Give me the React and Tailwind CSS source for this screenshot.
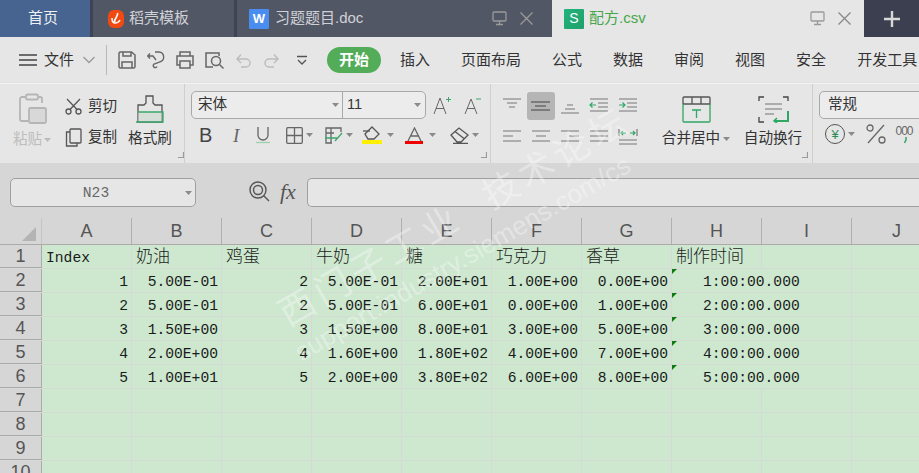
import React from 'react';

const cols = ['A', 'B', 'C', 'D', 'E', 'F', 'G', 'H', 'I', 'J'];
const menus = ['插入', '页面布局', '公式', '数据', '审阅', '视图', '安全', '开发工具'];
const head = ['Index', '奶油', '鸡蛋', '牛奶', '糖', '巧克力', '香草', '制作时间'];
const rows = [
  ['1', '5.00E-01', '2', '5.00E-01', '2.00E+01', '1.00E+00', '0.00E+00', '1:00:00.000'],
  ['2', '5.00E-01', '2', '5.00E-01', '6.00E+01', '0.00E+00', '1.00E+00', '2:00:00.000'],
  ['3', '1.50E+00', '3', '1.50E+00', '8.00E+01', '3.00E+00', '5.00E+00', '3:00:00.000'],
  ['4', '2.00E+00', '4', '1.60E+00', '1.80E+02', '4.00E+00', '7.00E+00', '4:00:00.000'],
  ['5', '1.00E+01', '5', '2.00E+00', '3.80E+02', '6.00E+00', '8.00E+00', '5:00:00.000'],
];

// small svg wrapper, stroke icons
const Ico = ({ w = 18, h = 18, c = '#666', sw = 1.3, className = '', children }) => (
  <svg width={w} height={h} viewBox={`0 0 ${w} ${h}`} fill="none" stroke={c} strokeWidth={sw} className={`shrink-0 ${className}`}>
    {children}
  </svg>
);

const Caret = ({ c = '#8a8a8a', className = '' }) => (
  <svg width="7" height="4" viewBox="0 0 7 4" className={`shrink-0 ${className}`}><path d="M0 0h7L3.5 4z" fill={c} /></svg>
);

const Corner = () => (
  <svg width="6" height="6" viewBox="0 0 6 6" className="shrink-0"><path d="M5.5 0v5.5H0" fill="none" stroke="#9a9a9a" strokeWidth="1.2" /></svg>
);

const Monitor = () => (
  <Ico w={15} h={15} c="#9a9a9a">
    <rect x="1" y="1" width="13" height="9" rx="1" />
    <path d="M7.500 10v3M4 13.500h7" />
  </Ico>
);

const Close = ({ c = '#9a9a9a' }) => (
  <Ico w={15} h={15} c={c}><path d="M1.500 1.500l12 12M13.500 1.500l-12 12" /></Ico>
);

const Tab = ({ className, children }) => (
  <div className={`flex h-full shrink-0 items-center ${className}`}>{children}</div>
);

const AlignIcon = ({ lines, active, green }) => (
  <div className={`flex h-[28px] w-[28px] items-center justify-center rounded-[3px] ${active ? 'bg-[#b5b5b5]' : ''}`}>
    <Ico w={20} h={18} c={active ? '#444' : '#777'} sw={1.2}>
      {lines.map((l, i) => <path key={i} d={l} />)}
      {green && <path d={green} stroke="#2fa866" />}
    </Ico>
  </div>
);

const GridCell = ({ children, right, last, head }) => (
  <div className={`flex h-full w-[90px] shrink-0 items-center overflow-visible border-r border-[#d5dad5] ${head ? 'pt-[3px]' : 'pt-[3px]'} ${right ? 'justify-end pr-[3px]' : 'pl-[4px]'} ${last ? 'border-r-0' : ''}`}>
    {children}
  </div>
);

const RowHead = ({ n }) => (
  <div className="flex h-full w-[42px] shrink-0 items-center justify-center border-r border-b border-[#ababab] bg-[#d6d6d6] font-['Liberation_Sans',sans-serif] text-[18px] text-[#555]">{n}</div>
);

export default function App() {
  return (
    <div className="relative h-[473px] w-[919px] overflow-hidden bg-[#d6d6d6] font-['Liberation_Sans','Noto_Sans_CJK_SC',sans-serif]">
      {/* tabs */}
      <div className="flex h-[37px] bg-[#3f4354] text-[15px]">
        <Tab className="w-[90px] justify-center bg-[#46648f] pr-[4px] text-[#eef0f4]">首页</Tab>
        <Tab className="ml-[3px] w-[141px] gap-[5px] bg-[#525766] pl-[15px] text-[#cfd1d6]">
          <svg width="16" height="18" viewBox="0 0 16 18" className="shrink-0">
            <rect width="16" height="18" rx="6" fill="#f04a12" />
            <path d="M9.500 3c1 3-3 5-3 9M4 8c0 3 1 5 3 5s4-1 5-3" fill="none" stroke="#fff" strokeWidth="1.600" />
          </svg>
          <span>稻壳模板</span>
        </Tab>
        <Tab className="ml-[3px] w-[315px] bg-[#525766] pl-[12px] text-[#cfd1d6]">
          <div className="flex h-[20px] w-[20px] items-center justify-center rounded-[1px] bg-[#4a8df0] text-[13px] font-bold text-white">W</div>
          <span className="ml-[6px]">习题题目.doc</span>
          <div className="ml-[129px] flex items-center gap-[12px]"><Monitor /><Close /></div>
        </Tab>
        <Tab className="w-[312px] bg-[#e6e6e6] pl-[12px] text-[#46a64a]">
          <div className="flex h-[20px] w-[20px] items-center justify-center rounded-[1px] bg-gradient-to-br from-[#22b37b] to-[#1fa06c] text-[14px] text-white">S</div>
          <span className="ml-[5px]">配方.csv</span>
          <div className="ml-[164px] flex items-center gap-[12px]"><Monitor /><Close c="#888" /></div>
        </Tab>
        <Tab className="flex-1 justify-center bg-[#3c3f4f]">
          <Ico w={16} h={16} c="#d8d8d8" sw={2.400}><path d="M8 0v16M0 8h16" /></Ico>
        </Tab>
      </div>

      {/* menu row */}
      <div className="flex h-[46px] items-center bg-[#e6e6e6] pl-[19px] text-[15px] text-[#333]">
        <Ico w={18} h={14} c="#444"><path d="M0 2h18M0 7h18M0 12h18" /></Ico>
        <span className="ml-[7px]">文件</span>
        <Ico w={12} h={8} c="#999" className="ml-[9px]"><path d="M.5 1l5.500 5.500L11.500 1" /></Ico>
        <div className="ml-[11px] h-[30px] w-px bg-[#b9b9b9]" />
        <div className="ml-[11px] flex items-center gap-[11px]">
          <Ico c="#666" sw={1.500}>
            <path d="M2.500 1h11l3.500 3v11.500a1.500 1.500 0 0 1-1.500 1.500h-13A1.500 1.500 0 0 1 1 15.500v-13A1.500 1.500 0 0 1 2.500 1z" />
            <path d="M5 1v4h8V1M4 17v-6h10v6" />
          </Ico>
          <Ico c="#666" sw={1.400}>
            <path d="M1 5h5l3 4M3 2.500L.8 5 3 7.500M8 1h4a5 5 0 0 1 1 9.800l-6 2.200a2 2 0 1 0 3 2.500" />
          </Ico>
          <Ico c="#666" sw={1.500}>
            <path d="M4 5V1h10v4M4 14H1V5h16v9h-3" />
            <rect x="4" y="10" width="10" height="7" />
          </Ico>
          <Ico w={19} c="#666" sw={1.500}>
            <path d="M8 16H1V2h13v3" />
            <circle cx="11" cy="10" r="4.500" />
            <path d="M14.500 13.500L18.500 17.500" />
          </Ico>
          <div className="ml-[1px] flex items-center gap-[13px]">
            <Ico w={15} h={15} c="#bdbdbd" sw={1.500}><path d="M1 6h9a4 4 0 0 1 0 8H5M5 1.500L1 6l4 4" /></Ico>
            <Ico w={15} h={15} c="#bdbdbd" sw={1.500}><path d="M14 6H5a4 4 0 0 0 0 8h5M10 1.500L14 6l-4 4" /></Ico>
          </div>
          <Ico w={10} h={10} c="#555" sw={1.300} className="ml-[7px]"><path d="M0 1.500h10M1 5l4 4 4-4" /></Ico>
        </div>
        <div className="ml-[20px] flex h-[26px] w-[54px] items-center justify-center rounded-full bg-[#52ac58] font-bold text-white">开始</div>
        <div className="ml-[19px] flex gap-[31px] whitespace-nowrap">
          {menus.map((m) => <span key={m}>{m}</span>)}
        </div>
      </div>

      {/* ribbon */}
      <div className="flex h-[80px] border-t border-[#f2f2f2] bg-[#e6e6e6] text-[14.600px] text-[#333] shadow-[0_1px_2px_#bbb]">
        {/* clipboard */}
        <div className="flex w-[185px] shrink-0 border-r border-[#cfcfcf]">
          <div className="ml-[13px] flex w-[40px] flex-col items-start">
            <Ico w={28} h={32} c="#b5b5b5" sw={1.800} className="mt-[9px] ml-[6px]">
              <path d="M7 4H3a2 2 0 0 0-2 2v20a2 2 0 0 0 2 2h6M19 4h2a2 2 0 0 1 2 2v4" />
              <rect x="7" y="1.500" width="12" height="5" rx="1.500" />
              <rect x="10" y="15" width="17" height="15" rx="1.500" fill="#d8d8d8" />
            </Ico>
            <div className="mt-[4px] flex items-center gap-[2px] text-[#bdbdbd]">粘贴<Caret c="#bbb" /></div>
          </div>
          <div className="ml-[12px] flex w-[56px] flex-col">
            <div className="mt-[12px] flex items-center gap-[6px]">
              <Ico w={17} h={17} c="#555">
                <circle cx="3.500" cy="13.500" r="2.500" /><circle cx="13.500" cy="13.500" r="2.500" />
                <path d="M5 11.500L15 1M12 11.500L2 1" />
              </Ico>
              <span>剪切</span>
            </div>
            <div className="mt-[9px] flex items-center gap-[6px]">
              <Ico w={17} h={19} c="#555">
                <path d="M5 4H1.500v14H12v-3" />
                <rect x="5" y="1" width="11" height="14" rx="1" />
              </Ico>
              <span>复制</span>
            </div>
          </div>
          <div className="ml-[7px] flex w-[44px] flex-col items-center">
            <Ico w={28} h={28} c="#555" sw={1.300} className="mt-[11px]">
              <path d="M10 1h7v7l2 2h7v17H2V10h6l2-2z" />
              <rect x="2.500" y="17" width="23" height="9.500" fill="#d6ded8" stroke="none" />
              <path d="M0 27h27V17H2" stroke="#3ba76a" />
            </Ico>
            <span className="mt-[5px] whitespace-nowrap">格式刷</span>
          </div>
          <div className="mb-[5px] ml-[6px] self-end"><Corner /></div>
        </div>

        {/* font */}
        <div className="flex w-[306px] shrink-0 flex-col border-r border-[#cfcfcf] pl-[6px]">
          <div className="mt-[7px] flex items-center">
            <div className="flex h-[28px] w-[235px] items-center rounded-[5px] border border-[#a8a8a8] bg-[#ececec] text-[14.600px]">
              <div className="flex h-full w-[151px] items-center justify-between border-r border-[#a8a8a8] pl-[6px] pr-[3px]">宋体<Caret /></div>
              <div className="flex flex-1 items-center justify-between pl-[4px] pr-[4px]">11<Caret /></div>
            </div>
            <div className="ml-[7px] flex items-start gap-[12px]">
              <Ico w={19} h={19} c="#666" sw={1}>
                <path d="M1 18L7 2l6 16M3 12.500h8" /><path d="M13 3.500h5M15.500 1v5" stroke="#3ba76a" />
              </Ico>
              <Ico w={18} h={19} c="#666" sw={1}>
                <path d="M1 18L7 3l6 15M3 12.500h8" /><path d="M12 3h5" stroke="#3ba76a" />
              </Ico>
            </div>
          </div>
          <div className="mt-[6px] flex items-center pl-[8px]">
            <span className="w-[34px] text-[20px] leading-none text-[#444]">B</span>
            <span className="w-[23px] font-['Liberation_Serif',serif] text-[19px] italic leading-none text-[#666]">I</span>
            <Ico w={14} h={18} c="#666" className="mr-[16px]"><path d="M2 1v8a5 5 0 0 0 10 0V1" /><path d="M0 16.500h14" stroke="#9ccfaa" /></Ico>
            <Ico w={17} h={17} c="#666"><rect x=".7" y=".7" width="15.600" height="15.600" rx="1" /><path d="M8.500 1v15M1 8.500h15" /></Ico>
            <Caret className="ml-[3px] mr-[11px]" />
            <Ico w={19} h={17} c="#666">
              <path d="M8 16H2V1h15v4M2 6h8M7 1v15" /><path d="M1 11h12M11 14l7-8" stroke="#3ba76a" />
            </Ico>
            <Caret className="ml-[3px] mr-[9px]" />
            <div className="flex flex-col items-center">
              <Ico w={20} h={14} c="#555"><path d="M3 8l7-7 7 7-5 5H6z" /><path d="M1 5h7" /></Ico>
              <div className="h-[4px] w-[20px] bg-[#fff000]" />
            </div>
            <Caret className="ml-[5px] mr-[11px]" />
            <div className="flex flex-col items-center">
              <Ico w={17} h={14} c="#666"><path d="M2 14L8.500 1 15 14M4.500 9h8" /></Ico>
              <div className="h-[3px] w-[18px] bg-[#f00000]" />
            </div>
            <Caret className="ml-[6px] mr-[14px]" />
            <Ico w={20} h={17} c="#555"><path d="M1 8l8-7 9 7-7 7H7zM5 4.500l9 7M3 16.500h15" /></Ico>
            <Caret className="ml-[2px]" />
          </div>
          <div className="mr-[3px] mt-auto mb-[5px] self-end"><Corner /></div>
        </div>

        {/* alignment */}
        <div className="flex w-[322px] shrink-0 border-r border-[#cfcfcf]">
          <div className="ml-[7px] mt-[8px] grid h-[60px] w-[144px] grid-cols-[repeat(5,28px)] grid-rows-[28px_28px] gap-y-[3px] gap-x-[1px]">
            <AlignIcon lines={['M1 2h18M5 6h10M7 10h6']} />
            <AlignIcon active lines={['M0 5h19M4 9h11M0 13h19']} />
            <AlignIcon lines={['M7 8h6M5 12h10M1 16h18']} />
            <AlignIcon lines={['M1 2h18M9 6h10M9 10h10M1 14h18']} green="M7 8H1M3.500 5.500L1 8l2.500 2.500" />
            <AlignIcon lines={['M1 2h18M9 6h10M9 10h10M1 14h18']} green="M1 8h6M4.500 5.500L7 8l-2.500 2.500" />
            <AlignIcon lines={['M1 3h18M1 8h10M1 13h18']} />
            <AlignIcon lines={['M1 3h18M5 8h10M1 13h18']} />
            <AlignIcon lines={['M1 3h18M9 8h10M1 13h18']} />
            <AlignIcon lines={['M1 3h18M1 8h18M1 13h18']} />
            <AlignIcon lines={['M1 1v7M19 1v7M1 12h18M1 16h18']} green="M3 5h5M5 3L3 5l2 2M12 5h5M15 3l2 2-2 2" />
          </div>
          <div className="ml-[24px] flex w-[60px] flex-col items-center">
            <Ico w={29} h={27} c="#555" sw={1.300} className="mt-[12px]">
              <path d="M1 8V2a1 1 0 0 1 1-1h25a1 1 0 0 1 1 1v6H1M10 1v7M19 1v7" />
              <path d="M1 8v17a1 1 0 0 0 1 1h25a1 1 0 0 0 1-1V8" stroke="#2fa866" />
              <path d="M10 14h9M14.500 14v8" stroke="#2fa866" />
            </Ico>
            <div className="mt-[5px] flex items-center gap-[3px] whitespace-nowrap">合并居中<Caret /></div>
          </div>
          <div className="ml-[17px] flex w-[60px] flex-col items-center">
            <Ico w={31} h={27} c="#444" sw={1.300} className="mt-[12px]">
              <path d="M6 1H1v4M25 1h5v4M1 21v5h5" />
              <path d="M7 8h17M7 13h17M7 18h9" stroke="#999" />
              <path d="M30 15v10H16" stroke="#2fa866" strokeWidth="2" />
              <path d="M19 22l-3 3 3 2" stroke="#2fa866" strokeWidth="1.500" />
            </Ico>
            <span className="mt-[5px] whitespace-nowrap">自动换行</span>
          </div>
          <div className="mb-[5px] -ml-px self-end"><Corner /></div>
        </div>

        {/* number */}
        <div className="flex min-w-0 flex-1 flex-col pl-[6px]">
          <div className="mt-[7px] flex h-[28px] w-[120px] shrink-0 items-center rounded-l-[5px] border border-[#a8a8a8] bg-[#ececec] pl-[8px]">常规</div>
          <div className="mt-[5px] flex items-center pl-[6px]">
            <div className="flex h-[20px] w-[20px] items-center justify-center rounded-full border border-[#555] text-[13px] leading-none text-[#2f8a5a]">¥</div>
            <Caret className="ml-[3px]" />
            <Ico w={20} h={20} c="#666" className="ml-[11px]">
              <circle cx="4" cy="4" r="3" /><circle cx="16" cy="16" r="3" /><path d="M18 1L2 19" />
            </Ico>
            <div className="ml-[9px] flex w-[18px] flex-col items-center">
              <span className="text-[12px] leading-[12px] tracking-[-1px] text-[#666]">000</span>
              <Ico w={3} h={7} c="#2fa866" sw={1.500} className="ml-[2px]"><path d="M2 0v3L.5 6" /></Ico>
            </div>
          </div>
        </div>
      </div>

      {/* formula bar */}
      <div className="flex h-[55px] items-start bg-[#d6d6d6] pt-[15px]">
        <div className="ml-[10px] flex h-[29px] w-[186px] items-center rounded-[5px] border border-[#a0a0a0] bg-[#e6e6e6] pr-[3px] font-['Liberation_Mono',monospace] text-[14.670px] text-[#666]">
          <span className="flex-1 pr-[4px] text-center">N23</span><Caret />
        </div>
        <Ico w={21} h={21} c="#555" sw={1.400} className="ml-[53px] mt-[3px]">
          <circle cx="9" cy="9" r="8" /><circle cx="9" cy="9" r="4.500" /><path d="M14.500 14.500l5.500 5.500" />
        </Ico>
        <span className="ml-[10px] mt-[2px] w-[18px] font-['Liberation_Serif',serif] text-[22px] italic leading-[24px] text-[#555]">fx</span>
        <div className="ml-[9px] h-[29px] flex-1 rounded-l-[5px] border border-r-0 border-[#a0a0a0] bg-[#e6e6e6]" />
      </div>

      {/* column heads */}
      <div className="flex h-[27px] border-b border-[#ababab] bg-[#d6d6d6] text-[18px] text-[#555]">
        <div className="flex w-[42px] shrink-0 items-end justify-end bg-gradient-to-r from-transparent from-[97%] to-[#bbb] pb-[3px] pr-[6px]">
          <svg width="14" height="14" viewBox="0 0 14 14"><path d="M14 0v14H0z" fill="#b4b4b4" /></svg>
        </div>
        {cols.map((c) => (
          <div key={c} className="flex w-[90px] shrink-0 items-center justify-center border-r border-r-[#b0b0b0] leading-none">{c}</div>
        ))}
      </div>

      {/* sheet */}
      <div className="font-['Liberation_Mono','Noto_Sans_CJK_SC',monospace] text-[14.670px] leading-[20px] text-[#1a1a1a]">
        <div className="flex h-[24px] border-b border-[#d5dad5] bg-[#cde8cf]">
          <RowHead n={1} />
          {head.map((h, i) => (
            <GridCell key={i} head><span className={i === 0 ? '' : 'text-[17px] font-light leading-[20px]'}>{h}</span></GridCell>
          ))}
          <GridCell /><GridCell last />
        </div>
        {rows.map((r, i) => (
          <div key={i} className="flex h-[24px] border-b border-[#d5dad5] bg-[#cde8cf]">
            <RowHead n={i + 2} />
            {r.slice(0, 7).map((v, j) => <GridCell key={j} right>{v}</GridCell>)}
            {/* time overflows into column I, green marker is over the corner */}
            <div className="relative flex h-full w-[180px] shrink-0 items-center border-r border-[#d5dad5] pt-[3px] pl-[31px]">
              <svg width="5" height="5" viewBox="0 0 5 5" className="absolute left-0 top-0"><path d="M0 0h5L0 5z" fill="#0f7a12" /></svg>
              {r[7]}
            </div>
            <GridCell last />
          </div>
        ))}
        {[7, 8, 9, 10].map((n) => (
          <div key={n} className="flex h-[24px] border-b border-[#d5dad5] bg-[#cde8cf]">
            <RowHead n={n} />
            {cols.map((c) => <GridCell key={c} />)}
          </div>
        ))}
      </div>

      {/* watermark over the whole page */}
      <div className="pointer-events-none absolute left-[282px] top-[290px] origin-left -rotate-[30deg] whitespace-nowrap text-[36px] tracking-[5px] text-white/35">西门子工业&nbsp;&nbsp;技术论坛</div>
      <div className="pointer-events-none absolute left-[297px] top-[335px] origin-left -rotate-[30deg] whitespace-nowrap font-['Liberation_Sans',sans-serif] text-[26px] tracking-[0.2px] text-white/35">support.industry.siemens.com/cs</div>
    </div>
  );
}
